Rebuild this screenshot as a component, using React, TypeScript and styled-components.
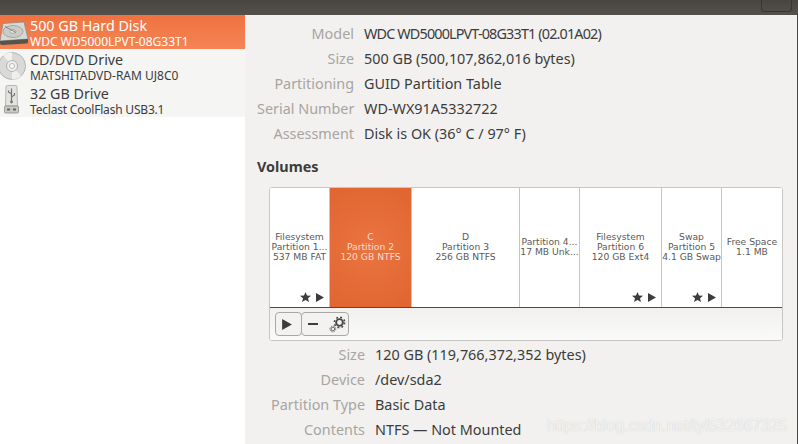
import { FC } from 'react';
import styled, { createGlobalStyle } from 'styled-components';

const GlobalStyle = createGlobalStyle`
  html, body {
    margin: 0;
    padding: 0;
    overflow: hidden;
    background: #f2f1f0;
  }
`;

const drives = [
  { title: '500 GB Hard Disk', sub: 'WDC WD5000LPVT-08G33T1', kind: 'hdd', active: true, tight: false },
  { title: 'CD/DVD Drive', sub: 'MATSHITADVD-RAM UJ8C0', kind: 'cd', active: false, tight: false },
  { title: '32 GB Drive', sub: 'Teclast CoolFlash USB3.1', kind: 'usb', active: false, tight: true },
];

const diskInfo = [
  { label: 'Model', value: 'WDC WD5000LPVT-08G33T1 (02.01A02)', tight: true },
  { label: 'Size', value: '500 GB (500,107,862,016 bytes)' },
  { label: 'Partitioning', value: 'GUID Partition Table' },
  { label: 'Serial Number', value: 'WD-WX91A5332722' },
  { label: 'Assessment', value: 'Disk is OK (36° C / 97° F)' },
];

const partitionInfo = [
  { label: 'Size', value: '120 GB (119,766,372,352 bytes)' },
  { label: 'Device', value: '/dev/sda2' },
  { label: 'Partition Type', value: 'Basic Data' },
  { label: 'Contents', value: 'NTFS — Not Mounted' },
];

const volumes = [
  { width: 60, lines: ['Filesystem', 'Partition 1...', '537 MB FAT'], marks: true },
  { width: 82, lines: ['C', 'Partition 2', '120 GB NTFS'], selected: true },
  { width: 108, lines: ['D', 'Partition 3', '256 GB NTFS'] },
  { width: 60, lines: ['Partition 4...', '17 MB Unk...'] },
  { width: 82, lines: ['Filesystem', 'Partition 6', '120 GB Ext4'], marks: true },
  { width: 60, lines: ['Swap', 'Partition 5', '4.1 GB Swap'], marks: true },
  { width: 60, lines: ['Free Space', '1.1 MB'] },
];

const HddIcon: FC = () => (
  <svg width="29" height="30" viewBox="0 0 29 30">
    <path d="M3 6.5 L24 5 L28 22 L0 24 Z" fill="#d8d9d5" stroke="#8c8d88" strokeWidth="0.8" />
    <ellipse cx="13" cy="14.5" rx="10" ry="6" fill="#cbccc8" stroke="#9b9c97" strokeWidth="0.8" />
    <ellipse cx="13" cy="14.5" rx="3" ry="1.8" fill="#e8e8e6" stroke="#8c8d88" strokeWidth="0.6" />
    <path d="M5 9.5 L16 15.5" stroke="#85867f" strokeWidth="1" />
    <path d="M0 24 L28 22 L28 25 Q28 26.5 26 26.5 L2 28 Q0 28 0 26 Z" fill="#55554f" />
  </svg>
);

const CdIcon: FC = () => (
  <svg width="29" height="30" viewBox="0 0 29 30">
    <circle cx="12" cy="15" r="13.5" fill="#d9d9d7" stroke="#a9a9a6" strokeWidth="0.8" />
    <path d="M12 15 L3 4 A13.5 13.5 0 0 1 12 1.5 Z" fill="#f0f0ee" />
    <path d="M12 15 L21 25 A13.5 13.5 0 0 1 12 28.5 Z" fill="#efefed" />
    <circle cx="12" cy="15" r="5.5" fill="#efefed" stroke="#a4a4a1" strokeWidth="0.8" />
    <circle cx="12" cy="15" r="2.5" fill="#ffffff" stroke="#a4a4a1" strokeWidth="0.8" />
  </svg>
);

const UsbIcon: FC = () => (
  <svg width="29" height="30" viewBox="0 0 29 30">
    <path d="M6 2 Q6 0.5 7.5 0.5 L15.5 0.5 Q17 0.5 17 2 L17.5 21 L5.5 21 Z" fill="#e3e3e1" stroke="#a8a8a5" strokeWidth="0.8" />
    <path d="M11.5 3.5 V17 M11.5 9 L8.5 7 V5.5 M11.5 12 L14.5 10 V8" stroke="#77776f" strokeWidth="1.2" fill="none" />
    <circle cx="11.5" cy="17" r="1.4" fill="#77776f" />
    <rect x="4.5" y="21" width="14" height="7" rx="1" fill="#c9c9c6" stroke="#8c8c88" strokeWidth="0.8" />
    <rect x="7" y="23.5" width="3" height="2" fill="#66665f" />
    <rect x="13" y="23.5" width="3" height="2" fill="#66665f" />
  </svg>
);

const GearsIcon: FC = () => (
  <svg width="17" height="17" viewBox="0 0 17 17">
    <circle cx="10.5" cy="6.5" r="3.4" fill="none" stroke="#464646" strokeWidth="1.9" />
    <circle cx="10.5" cy="6.5" r="5.2" fill="none" stroke="#464646" strokeWidth="1.5" strokeDasharray="1.9 2.2" />
    <circle cx="3.8" cy="13" r="1.8" fill="none" stroke="#666" strokeWidth="1" />
    <circle cx="3.8" cy="13" r="2.9" fill="none" stroke="#666" strokeWidth="1" strokeDasharray="1.2 1.1" />
  </svg>
);

const StarIcon: FC = () => (
  <svg width="11" height="10" viewBox="0 0 11 10">
    <path d="M5.5 0 L7 3.5 L11 3.8 L8 6.2 L9 10 L5.5 8 L2 10 L3 6.2 L0 3.8 L4 3.5 Z" fill="#3c3c3c" />
  </svg>
);

const PlayIcon: FC<{ size: number }> = ({ size }) => (
  <svg width={size} height={size + 1} viewBox="0 0 8 9">
    <path d="M0 0 L8 4.5 L0 9 Z" fill="#3c3c3c" />
  </svg>
);

const driveIcons: Record<string, FC> = { hdd: HddIcon, cd: CdIcon, usb: UsbIcon };

type InfoItem = { label: string; value: string; tight?: boolean };

const InfoTable: FC<{ rows: InfoItem[] }> = ({ rows }) => (
  <Table>
    {rows.map((row) => (
      <InfoRow key={row.label}>
        <InfoLabel>{row.label}</InfoLabel>
        <InfoValue $tight={!!row.tight}>{row.value}</InfoValue>
      </InfoRow>
    ))}
  </Table>
);

const App: FC = () => (
  <Window>
    <GlobalStyle />
    <TitleBar>
      <TitleButton />
    </TitleBar>
    <Body>
      <Sidebar>
        {drives.map((d) => {
          const Icon = driveIcons[d.kind];
          return (
            <DriveRow key={d.title} $active={d.active}>
              <Icon />
              <DriveText>
                <DriveTitle>{d.title}</DriveTitle>
                <DriveSub $tight={d.tight}>{d.sub}</DriveSub>
              </DriveText>
            </DriveRow>
          );
        })}
      </Sidebar>
      <Main>
        <InfoTable rows={diskInfo} />
        <VolumesTitle>Volumes</VolumesTitle>
        <VolumeBox>
          <VolumeStrip>
            {volumes.map((v) => (
              <Volume key={v.lines.join()} $width={v.width} $selected={!!v.selected}>
                {v.lines.map((l) => (
                  <span key={l}>{l}</span>
                ))}
                {v.marks && (
                  <Marks>
                    <StarIcon />
                    <PlayIcon size={8} />
                  </Marks>
                )}
              </Volume>
            ))}
          </VolumeStrip>
          <Toolbar>
            <ToolButton $width={27}>
              <PlayIcon size={10} />
            </ToolButton>
            <ToolButton $width={48}>
              <Minus />
              <GearsIcon />
            </ToolButton>
          </Toolbar>
        </VolumeBox>
        <PartitionInfo>
          <InfoTable rows={partitionInfo} />
        </PartitionInfo>
      </Main>
    </Body>
    <Watermark>https://blog.csdn.net/tyl532667325</Watermark>
  </Window>
);

export default App;

const Window = styled.div`
  position: relative;
  width: 798px;
  height: 444px;
  overflow: hidden;
  display: flex;
  flex-direction: column;
  background: #f2f1f0;
  font-family: 'Noto Sans', 'Open Sans', sans-serif;
`;

const TitleBar = styled.div`
  height: 15px;
  flex: none;
  display: flex;
  justify-content: flex-end;
  padding-right: 6px;
  background: linear-gradient(#47453f, #53514a);
`;

const TitleButton = styled.div`
  width: 31px;
  height: 12px;
  box-sizing: border-box;
  border: 1px solid #38362f;
  border-top: none;
  border-radius: 0 0 4px 4px;
`;

const Body = styled.div`
  flex: 1;
  display: flex;
  min-height: 0;
`;

const Sidebar = styled.div`
  width: 245px;
  flex: none;
  background: #fff;
`;

const DriveRow = styled.div<{ $active: boolean }>`
  height: 34px;
  display: flex;
  align-items: center;
  gap: 1px;
  color: ${(p) => (p.$active ? '#fff' : '#3c3c3c')};
  background: ${(p) => (p.$active ? 'linear-gradient(#ef7240, #f58454)' : '#f5f5f4')};
`;

const DriveText = styled.div`
  display: flex;
  flex-direction: column;
  padding-top: 1px;
  white-space: nowrap;
`;

const DriveTitle = styled.div`
  font-size: 14.3px;
  line-height: 18px;
`;

const DriveSub = styled.div<{ $tight: boolean }>`
  font-size: 12px;
  line-height: 14px;
  letter-spacing: ${(p) => (p.$tight ? '-0.2px' : '0')};
`;

const Main = styled.div`
  flex: 1;
  padding: 6px 0 0 12px;
  border-right: 1px solid #4c4a44;
`;

const Table = styled.div`
  display: flex;
  flex-direction: column;
`;

const InfoRow = styled.div`
  height: 25px;
  display: flex;
  align-items: center;
  gap: 10px;
  font-size: 14.4px;
  white-space: nowrap;
`;

const InfoLabel = styled.div`
  width: 97px;
  text-align: right;
  color: #a8a59f;
`;

const InfoValue = styled.div<{ $tight: boolean }>`
  color: #3c3c3c;
  letter-spacing: ${(p) => (p.$tight ? '-0.85px' : '0')};
`;

const VolumesTitle = styled.div`
  margin-top: 9px;
  height: 24px;
  line-height: 24px;
  font-size: 14.4px;
  font-weight: 700;
  color: #3c3c3c;
`;

const VolumeBox = styled.div`
  width: 514px;
  height: 154px;
  margin: 8px 0 0 12px;
  box-sizing: border-box;
  border: 1px solid #c8c6c2;
  border-radius: 3px;
  overflow: hidden;
  background: #f7f7f6;
`;

const VolumeStrip = styled.div`
  height: 119px;
  display: flex;
  background: #fff;
  border-bottom: 1px solid #4a4a48;
`;

const Volume = styled.div<{ $width: number; $selected: boolean }>`
  position: relative;
  width: ${(p) => p.$width}px;
  flex: none;
  box-sizing: border-box;
  display: flex;
  flex-direction: column;
  align-items: center;
  justify-content: center;
  padding-bottom: 1px;
  overflow: hidden;
  white-space: nowrap;
  border-right: 1px solid #c8c6c2;
  font-family: 'DejaVu Sans', sans-serif;
  font-size: 9.2px;
  line-height: 10px;
  color: ${(p) => (p.$selected ? '#f9dccd' : '#5a5a58')};
  background: ${(p) =>
    p.$selected ? 'radial-gradient(circle, #ea7440 0%, #e06530 100%)' : '#fff'};

  &:last-child {
    border-right: none;
  }
`;

const Marks = styled.div`
  position: absolute;
  right: 5px;
  bottom: 5px;
  display: flex;
  align-items: center;
  gap: 5px;
`;

const Toolbar = styled.div`
  height: 32px;
  box-sizing: border-box;
  display: flex;
  align-items: flex-start;
  padding: 4px 0 0 5px;
  background: linear-gradient(#f1f0ee, #fafafa);
`;

const ToolButton = styled.div<{ $width: number }>`
  width: ${(p) => p.$width}px;
  height: 24px;
  box-sizing: border-box;
  display: flex;
  align-items: center;
  justify-content: space-between;
  padding: 0 2px 0 6px;
  border: 1px solid #aaa8a3;
  border-radius: 4px;
  background: #f3f2f0;

  & + & {
    margin-left: -1px;
  }
`;

const Minus = styled.div`
  width: 10px;
  height: 2px;
  background: #3c3c3c;
`;

const PartitionInfo = styled.div`
  margin: 1px 0 0 11px;
`;

const Watermark = styled.div`
  position: absolute;
  left: 547px;
  bottom: 9px;
  font-family: 'Liberation Sans', sans-serif;
  font-size: 15.8px;
  color: rgba(255, 255, 255, 0.8);
  text-shadow: 0 0 1px rgba(170, 170, 170, 0.7);
  white-space: nowrap;
`;
